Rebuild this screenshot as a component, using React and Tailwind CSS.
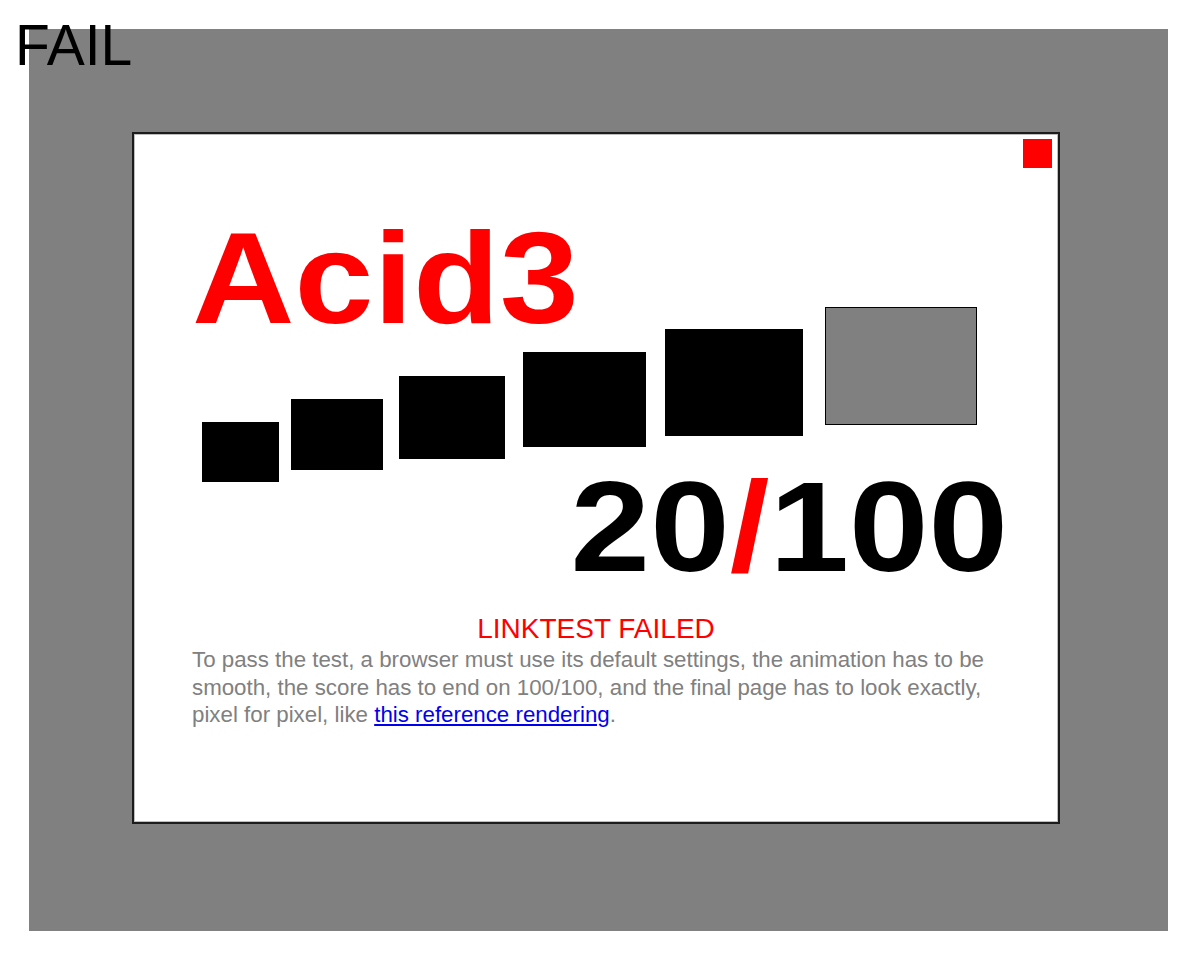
export default function App() {
  return (
    <div className="relative min-h-[959px] bg-white font-['Liberation_Sans',Arial,sans-serif]">
      {/* status label drawn over the silver canvas */}
      <div className="absolute left-[15px] top-[17px] z-10 text-[57px] leading-none text-black">
        FAIL
      </div>

      <div className="ml-[29px] pt-[29px]">
        <div className="h-[902px] w-[1139px] bg-[#808080] pl-[103px] pt-[103px]">
          <div className="flex h-[692px] w-[928px] flex-col border-2 border-[#1c1c1c] bg-white shadow-[inset_0_0_0_1px_#bdbdbd]">
            {/* corner marker */}
            <div className="flex justify-end pr-[6px] pt-[5px]">
              <div className="h-[29px] w-[29px] bg-[#ff0000]" />
            </div>

            <div className="ml-[58px] mt-[39px] origin-center scale-y-[0.91] text-[142px] font-bold leading-none text-[#ff0000]">
              Acid3
            </div>

            {/* bucket row */}
            <div className="-mt-[42px] ml-[68px] flex items-start">
              <div className="mt-[115px] h-[60px] w-[77px] bg-black" />
              <div className="ml-[12px] mt-[92px] h-[71px] w-[92px] bg-black" />
              <div className="ml-[16px] mt-[69px] h-[83px] w-[106px] bg-black" />
              <div className="ml-[18px] mt-[45px] h-[95px] w-[123px] bg-black" />
              <div className="ml-[19px] mt-[22px] h-[107px] w-[138px] bg-black" />
              <div className="ml-[22px] h-[118px] w-[152px] border border-black bg-[#808080]" />
            </div>

            <div className="-mt-[27px] mr-[50px] origin-center scale-y-[0.9] text-right text-[143px] font-bold leading-none text-black">
              20<span className="text-[#ff0000]">/</span>100
            </div>

            <div className="mt-[15px] text-center text-[28px] leading-[32px] text-[#ff0000]">
              LINKTEST FAILED
            </div>

            <p className="ml-[58px] mr-[46px] mt-[1px] text-[22.3px] leading-[27.5px] text-[#808080]">
              To pass the test, a browser must use its default settings, the animation has to be
              smooth, the score has to end on 100/100, and the final page has to look exactly,
              pixel for pixel, like{" "}
              <a href="#" className="text-[#0000ee] underline">
                this reference rendering
              </a>
              .
            </p>
          </div>
        </div>
      </div>
    </div>
  );
}
